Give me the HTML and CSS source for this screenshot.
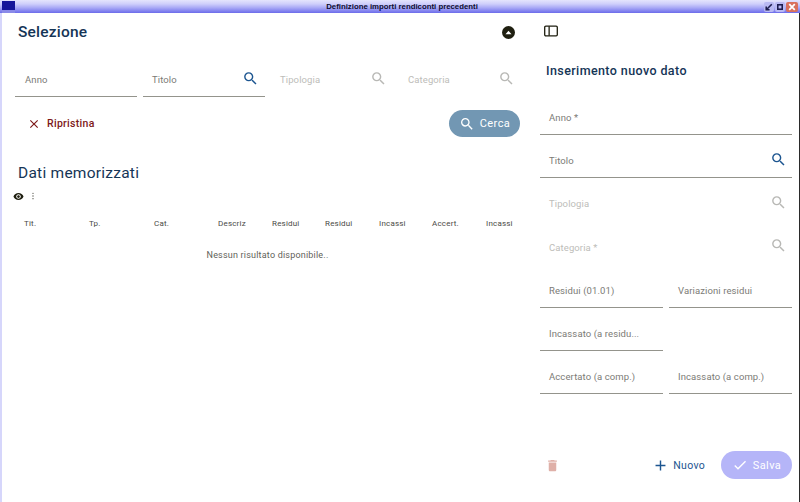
FILE: index.html
```html
<!DOCTYPE html>
<html lang="it">
<head>
<meta charset="utf-8">
<title>Definizione importi rendiconti precedenti</title>
<link rel="stylesheet" href="styles.css">
</head>
<body>
<svg class="sprite" width="0" height="0" aria-hidden="true">
  <symbol id="search" viewBox="0 0 24 24"><path d="M15.5 14h-.79l-.28-.27A6.47 6.47 0 0 0 16 9.5 6.5 6.5 0 1 0 9.5 16c1.61 0 3.09-.59 4.23-1.57l.27.28v.79l5 4.99L20.49 19l-4.99-5zm-6 0C7.01 14 5 11.99 5 9.5S7.01 5 9.5 5 14 7.01 14 9.5 11.99 14 9.5 14z"/></symbol>
</svg>
<div class="window">
  <header class="titlebar">
    <svg class="app-icon" viewBox="0 0 13 12"><rect width="13" height="12" fill="#16169a"/><rect y="9" width="13" height="3" fill="#8a8ae8"/></svg>
    <span class="title">Definizione importi rendiconti precedenti</span>
    <div class="win-btns">
      <span class="win-btn"><svg viewBox="0 0 9 9"><path d="M7 2 2.5 6.5M2 4v3h3" fill="none" stroke="#1c1c50" stroke-width="1.4"/></svg></span>
      <span class="win-btn"><svg viewBox="0 0 9 9"><rect x="2.5" y="2.5" width="4" height="4" fill="none" stroke="#1c1c50" stroke-width="1.4"/></svg></span>
      <span class="win-btn win-close"><svg viewBox="0 0 9 9"><path d="M2 2l5 5M7 2 2 7" stroke="#fff" stroke-width="1.6"/></svg></span>
    </div>
  </header>
  <div class="content">
    <main class="left">
      <div class="section-head">
        <h1 class="h-main">Selezione</h1>
        <span class="collapse"><svg viewBox="0 0 8 5"><path d="M4 .5 7.5 4.5H.5z" fill="#fff"/></svg></span>
      </div>
      <div class="filters">
        <div class="field"><span class="label">Anno</span></div>
        <div class="field"><span class="label">Titolo</span><svg class="ico ico-blue"><use href="#search"/></svg></div>
        <div class="field field-off"><span class="label">Tipologia</span><svg class="ico"><use href="#search"/></svg></div>
        <div class="field field-off"><span class="label">Categoria</span><svg class="ico"><use href="#search"/></svg></div>
      </div>
      <div class="actions">
        <span class="reset"><svg viewBox="0 0 24 24"><path d="M19 6.41 17.59 5 12 10.59 6.41 5 5 6.41 10.59 12 5 17.59 6.41 19 12 13.41 17.59 19 19 17.59 13.41 12z"/></svg>Ripristina</span>
        <span class="btn btn-search"><svg class="ico-btn"><use href="#search"/></svg>Cerca</span>
      </div>
      <h2 class="h-main h-data">Dati memorizzati</h2>
      <div class="tools">
        <svg class="eye" viewBox="0 0 24 24"><path d="M12 4.5C7 4.5 2.73 7.61 1 12c1.73 4.39 6 7.5 11 7.5s9.27-3.11 11-7.5c-1.73-4.39-6-7.5-11-7.5zM12 17c-2.76 0-5-2.24-5-5s2.24-5 5-5 5 2.24 5 5-2.24 5-5 5zm0-8c-1.66 0-3 1.34-3 3s1.34 3 3 3 3-1.34 3-3-1.34-3-3-3z"/></svg>
        <svg class="dots" viewBox="0 0 4 12"><circle cx="2" cy="2" r="1"/><circle cx="2" cy="6" r="1"/><circle cx="2" cy="10" r="1"/></svg>
      </div>
      <div class="thead">
        <span>Tit.</span><span>Tp.</span><span>Cat.</span><span>Descriz</span><span>Residui</span><span>Residui</span><span>Incassi</span><span>Accert.</span><span>Incassi</span>
      </div>
      <p class="empty">Nessun risultato disponibile..</p>
    </main>
    <aside class="right">
      <svg class="panel-ico" viewBox="0 0 15 12"><rect x=".75" y=".75" width="13.5" height="10.5" rx="1.2" fill="none" stroke="#1f1f10" stroke-width="1.4"/><path d="M5.5 1v10" stroke="#1f1f10" stroke-width="1.4"/></svg>
      <h2 class="h-side">Inserimento nuovo dato</h2>
      <div class="form">
        <div class="field wide"><span class="label">Anno *</span></div>
        <div class="field wide"><span class="label">Titolo</span><svg class="ico ico-blue"><use href="#search"/></svg></div>
        <div class="field wide field-off"><span class="label">Tipologia</span><svg class="ico"><use href="#search"/></svg></div>
        <div class="field wide field-off"><span class="label">Categoria *</span><svg class="ico"><use href="#search"/></svg></div>
        <div class="field"><span class="label">Residui (01.01)</span></div>
        <div class="field"><span class="label">Variazioni residui</span></div>
        <div class="field"><span class="label">Incassato (a residu...</span></div>
        <div class="spacer"></div>
        <div class="field"><span class="label">Accertato (a comp.)</span></div>
        <div class="field"><span class="label">Incassato (a comp.)</span></div>
      </div>
      <div class="footer">
        <svg class="trash" viewBox="0 0 24 24"><path d="M6 19c0 1.1.9 2 2 2h8c1.1 0 2-.9 2-2V7H6v12zM19 4h-3.5l-1-1h-5l-1 1H5v2h14V4z"/></svg>
        <span class="new"><svg viewBox="0 0 24 24"><path d="M19 13h-6v6h-2v-6H5v-2h6V5h2v6h6v2z"/></svg>Nuovo</span>
        <span class="btn btn-save"><svg viewBox="0 0 24 24"><path d="M9 16.17 4.83 12l-1.42 1.41L9 19 21 7l-1.41-1.41z"/></svg>Salva</span>
      </div>
    </aside>
  </div>
</div>
</body>
</html>
```
FILE: styles.css
```css
* { box-sizing: border-box; }
html, body { margin: 0; padding: 0; }
body { width: 800px; height: 502px; overflow: hidden; background: #fff; font-family: Roboto, sans-serif; }
.sprite { position: absolute; }
.window { width: 800px; height: 502px; display: flex; flex-direction: column; }

.titlebar {
  height: 13px; flex: none; display: flex; align-items: center; justify-content: space-between;
  background: linear-gradient(#e4e4fd 0, #cfcffb 30%, #a8a8f6 60%, #6c6cea 100%);
  padding: 0 2px;
}
.app-icon { width: 13px; height: 12px; display: block; }
.title { font: bold 7.8px "Liberation Sans", sans-serif; color: #0b0b30; padding: 0 3px; line-height: 13px; margin-left: 25px; }
.win-btns { display: flex; gap: 1px; }
.win-btn { width: 10px; height: 10px; border-radius: 2px; background: #b9b9f3; display: block; }
.win-btn svg { width: 10px; height: 10px; display: block; }
.win-close { background: #d9705c; width: 12px; }
.win-close svg { width: 12px; }

.content { flex: 1; min-height: 0; display: flex; border-left: 2px solid #d6d6fb; border-right: 1px solid #2a2a2a; }
.left { width: 528px; flex: none; padding: 0 10px 0 13px; }
.right { flex: 1; padding: 0 7px 0 10px; display: flex; flex-direction: column; }

.h-main { margin: 0; font-size: 15.5px; font-weight: 500; color: #153556; letter-spacing: .2px; line-height: 20px; }
.section-head { display: flex; justify-content: space-between; align-items: center; padding: 9px 5.5px 0 3px; }
.collapse { width: 13px; height: 13px; border-radius: 50%; background: #1f1f10; display: flex; align-items: center; justify-content: center; }
.collapse svg { width: 7px; height: 5px; display: block; }

.field { height: 43.2px; border-bottom: 1px solid #94948c; display: flex; align-items: center; justify-content: space-between; padding: 9px 5px 0 9px; }
.label { font-size: 9.5px; color: #7b7b76; letter-spacing: .1px; white-space: nowrap; }
.field-off { border-bottom-color: transparent; }
.field-off .label { color: #bdbdb9; }
.ico { width: 17px; height: 17px; fill: #b8b8b5; display: block; margin-top: -3px; }
.ico-blue { fill: #1c5590; }

.filters { display: grid; grid-template-columns: repeat(4, 122px); gap: 6px; padding-top: 12px; }
.filters .field { height: 43px; padding: 9px 6.5px 0 9px; }
.filters .field:first-child { padding-left: 10px; }

.actions { display: flex; justify-content: space-between; align-items: center; padding: 13px 0 0 12px; }
.reset { display: flex; align-items: center; gap: 6px; font-size: 10.5px; font-weight: 500; color: #7c1818; letter-spacing: .3px; }
.reset svg { width: 14px; height: 14px; fill: #7c1818; display: block; }
.btn { display: flex; align-items: center; justify-content: center; height: 28px; border-radius: 14px; width: 71px; color: #fff; font-size: 11px; letter-spacing: .4px; }
.btn-search { background: #7297b3; height: 27px; gap: 5px; }
.ico-btn { width: 16px; height: 16px; fill: #fff; display: block; }

.h-data { padding: 26px 0 0 3px; font-size: 15.5px; font-weight: 400; letter-spacing: .25px; }
.tools { display: flex; align-items: center; gap: 7px; padding: 6px 0 0 0; height: 20px; margin-left: -2px; }
.eye { width: 11px; height: 11px; fill: #1f1f10; display: block; }
.dots { width: 4px; height: 8px; fill: #55554c; display: block; }
.thead { display: grid; grid-template-columns: 65px 65px 64px 54px 53px 54px 53px 54px auto; padding: 15px 0 0 9px; font-size: 8px; color: #4a4a46; letter-spacing: .2px; line-height: 12px; white-space: nowrap; }
.empty { margin: 19px 0 0; text-align: center; font-size: 9px; color: #5f5f59; letter-spacing: .2px; line-height: 12px; }

.panel-ico { width: 14px; height: 12px; display: block; margin: 12px 0 0 4px; }
.h-side { margin: 0; font-size: 12.5px; font-weight: 500; color: #153556; letter-spacing: .4px; line-height: 16px; padding: 26px 0 0 6px; }
.form { display: grid; grid-template-columns: 123px 123px; gap: 0 6px; padding-top: 13px; }
.wide { grid-column: 1 / -1; }

.footer { margin-top: auto; display: flex; align-items: center; padding: 0 0 23px 5px; }
.trash { width: 15px; height: 15px; fill: #dfb0a8; display: block; }
.new { margin-left: auto; display: flex; align-items: center; gap: 4px; font-size: 10.5px; font-weight: 400; color: #1c5590; letter-spacing: .3px; }
.new svg { width: 17px; height: 17px; fill: #1c5590; display: block; }
.btn-save { background: #b5b5f8; margin-left: 16px; gap: 5px; }
.btn-save svg { width: 16px; height: 16px; fill: #fff; display: block; }
```
